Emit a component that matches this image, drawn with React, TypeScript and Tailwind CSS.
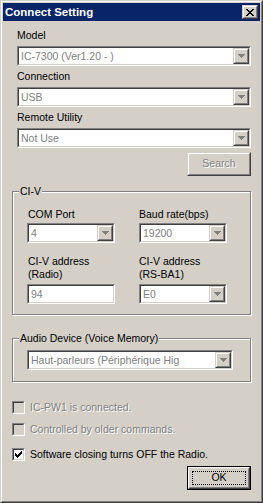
import React from 'react';

function Sunken({ className = '', inner = 'bg-white', children }: { className?: string; inner?: string; children?: React.ReactNode }) {
  return (
    <div className={`border border-t-[#808080] border-l-[#808080] border-b-white border-r-white ${className}`}>
      <div className={`h-full border border-t-[#404040] border-l-[#404040] border-b-[#d4d0c8] border-r-[#d4d0c8] ${inner}`}>
        {children}
      </div>
    </div>
  );
}

function Raised({ className = '', children }: { className?: string; children?: React.ReactNode }) {
  return (
    <div className={`border border-t-[#d4d0c8] border-l-[#d4d0c8] border-b-[#404040] border-r-[#404040] ${className}`}>
      <div className="h-full border border-t-white border-l-white border-b-[#808080] border-r-[#808080] bg-[#d4d0c8] flex items-center justify-center">
        {children}
      </div>
    </div>
  );
}

function Pixels({ rows, color, w }: { rows: string[]; color: string; w: number }) {
  return (
    <svg width={w} height={rows.length} shapeRendering="crispEdges">
      {rows.map((r, y) =>
        r.split('').map((c, x) => (c === 'X' ? <rect key={`${x}-${y}`} x={x} y={y} width={1} height={1} fill={color} /> : null))
      )}
    </svg>
  );
}

const arrowRows = ['XXXXXXX', '.XXXXX.', '..XXX..', '...X...'];

function Combo({ value, className = '' }: { value: string; className?: string }) {
  return (
    <Sunken className={`h-[20px] ${className}`}>
      <div className="flex h-full">
        <span className="flex-1 pl-[2px] leading-[16px] text-[#808080] whitespace-nowrap overflow-hidden">{value}</span>
        <Raised className="w-[16px] h-full">
          <Pixels rows={arrowRows} color="#808080" w={7} />
        </Raised>
      </div>
    </Sunken>
  );
}

function Label({ children, className = '' }: { children: React.ReactNode; className?: string }) {
  return <div className={`leading-[13px] text-black ${className}`}>{children}</div>;
}

function Group({ title, className = '', children }: { title: string; className?: string; children?: React.ReactNode }) {
  return (
    <div className={`relative border border-[#808080] shadow-[inset_1px_1px_0_#ffffff,1px_1px_0_#ffffff] ${className}`}>
      <span className="absolute -top-[7px] left-[6px] px-[1px] bg-[#d4d0c8] leading-[13px]">{title}</span>
      {children}
    </div>
  );
}

function Check({ label, checked, disabled }: { label: string; checked?: boolean; disabled?: boolean }) {
  return (
    <div className="flex items-center gap-[5px]">
      <Sunken className="w-[13px] h-[13px]" inner={disabled ? 'bg-[#d4d0c8]' : 'bg-white'}>
        {checked && (
          <div className="pl-[1px] pt-[1px]">
            <Pixels
              rows={['......X', '.....XX', 'X...XXX', 'XX.XXX.', 'XXXXX..', '.XXX...', '..X....']}
              color="#000000"
              w={7}
            />
          </div>
        )}
      </Sunken>
      <span
        className={`leading-[13px] ${disabled ? 'text-[#808080] [text-shadow:1px_1px_0_#ffffff]' : 'text-black'}`}
      >
        {label}
      </span>
    </div>
  );
}

export default function App() {
  return (
    <div className="w-[263px] h-[503px] font-['Liberation_Sans',Arial,sans-serif] text-[10.5px] border border-t-[#d4d0c8] border-l-[#d4d0c8] border-b-[#404040] border-r-[#404040]">
      <div className="h-full border border-t-white border-l-white border-b-[#808080] border-r-[#808080] bg-[#d4d0c8] p-[1px] flex flex-col">
        {/* Title bar */}
        <div className="h-[18px] bg-[#0a246a] flex items-center justify-between pl-[2px] pr-[2px]">
          <span className="text-white font-bold text-[11.5px] leading-[18px]">Connect Setting</span>
          <Raised className="w-[16px] h-[14px]">
            <Pixels
              rows={['XX....XX', '.XX..XX.', '..XXXX..', '...XX...', '..XXXX..', '.XX..XX.', 'XX....XX']}
              color="#000000"
              w={8}
            />
          </Raised>
        </div>

        {/* Body */}
        <div className="flex flex-col pl-[9px] pr-[9px]">
          <div className="flex flex-col ml-[5px]">
            <Label className="mt-[8px]">Model</Label>
            <Combo value="IC-7300 (Ver1.20 - )" className="mt-[4px] w-full" />
            <Label className="mt-[4px]">Connection</Label>
            <Combo value="USB" className="mt-[4px] w-full" />
            <Label className="mt-[4px]">Remote Utility</Label>
            <Combo value="Not Use" className="mt-[4px] w-full" />
            <div className="mt-[4px] flex justify-end">
              <Raised className="w-[64px] h-[24px]">
                <span className="text-[#808080] [text-shadow:1px_1px_0_#ffffff]">Search</span>
              </Raised>
            </div>
          </div>

          {/* CI-V */}
          <Group title="CI-V" className="mt-[15px] h-[124px] pl-[14px] pt-[16px]">
            <div className="grid grid-cols-[88px_88px] gap-x-[24px]">
              <Label className="pl-[1px]">COM Port</Label>
              <Label>Baud rate(bps)</Label>
              <Combo value="4" className="mt-[2px]" />
              <Combo value="19200" className="mt-[2px]" />
              <Label className="mt-[12px] pl-[1px]">
                CI-V address
                <br />
                (Radio)
              </Label>
              <Label className="mt-[12px]">
                CI-V address
                <br />
                (RS-BA1)
              </Label>
              <Sunken className="mt-[3px] h-[20px]">
                <span className="block pl-[2px] leading-[16px] text-[#808080]">94</span>
              </Sunken>
              <Combo value="E0" className="mt-[3px]" />
            </div>
          </Group>

          {/* Audio Device */}
          <Group title="Audio Device (Voice Memory)" className="mt-[23px] h-[44px] pl-[14px] pt-[11px]">
            <Combo value="Haut-parleurs (Périphérique Hig" className="w-[206px]" />
          </Group>

          <div className="mt-[19px]">
            <Check label="IC-PW1 is connected." disabled />
          </div>
          <div className="mt-[9px]">
            <Check label="Controlled by older commands." disabled />
          </div>
          <div className="mt-[12px]">
            <Check label="Software closing turns OFF the Radio." checked />
          </div>

          <div className="mt-[5px] flex justify-end">
            <div className="w-[64px] h-[24px] border border-black">
              <div className="h-full border border-t-white border-l-white border-b-[#404040] border-r-[#404040]">
                <div className="h-full border border-t-[#d4d0c8] border-l-[#d4d0c8] border-b-[#808080] border-r-[#808080] p-[2px]">
                  <div className="h-full border border-dotted border-black flex items-center justify-center text-black">
                    OK
                  </div>
                </div>
              </div>
            </div>
          </div>
        </div>
      </div>
    </div>
  );
}
